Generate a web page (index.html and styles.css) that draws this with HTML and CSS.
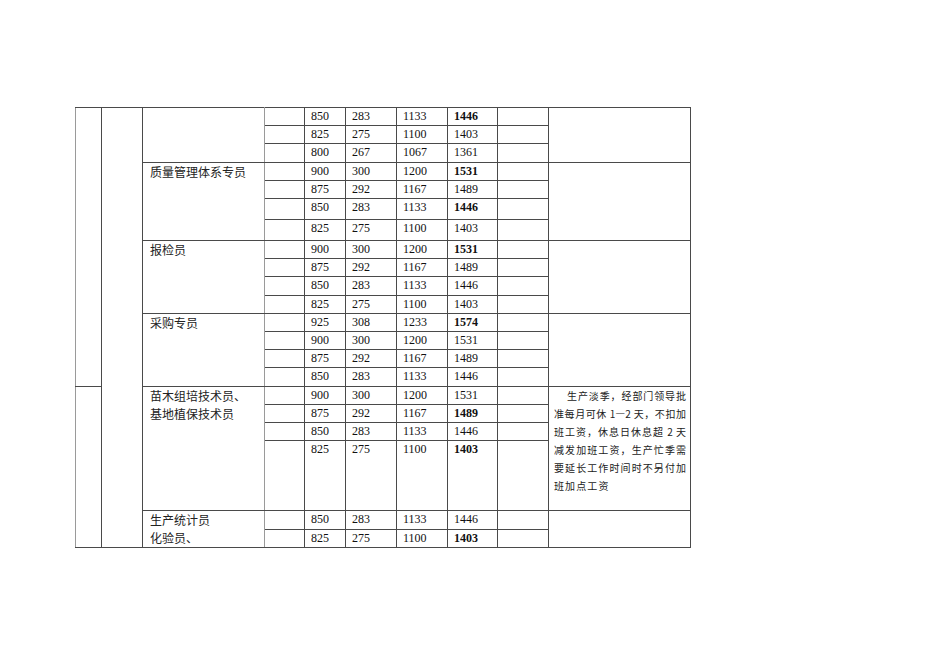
FILE: index.html
```html
<!DOCTYPE html>
<html lang="zh">
<head>
<meta charset="utf-8">
<title>工资表</title>
<link rel="stylesheet" href="styles.css">
</head>
<body>
<div class="page">
<table class="pay">
<colgroup>
<col class="c1"><col class="c2"><col class="c3"><col class="c4"><col class="c5"><col class="c6"><col class="c7"><col class="c8"><col class="c9"><col class="c10">
</colgroup>
<tbody>
<tr class="h18">
  <td class="lead" rowspan="15"></td>
  <td class="lead2" rowspan="21"></td>
  <td class="title" rowspan="3"></td>
  <td class="blank"></td><td>850</td><td>283</td><td class="lv">1133</td><td><b>1446</b></td><td></td>
  <td class="note" rowspan="3"></td>
</tr>
<tr class="h18"><td class="blank"></td><td>825</td><td>275</td><td class="lv">1100</td><td>1403</td><td></td></tr>
<tr class="h19"><td class="blank"></td><td>800</td><td>267</td><td class="lv">1067</td><td>1361</td><td></td></tr>

<tr class="h18 grp">
  <td class="title" rowspan="4">质量管理体系专员</td>
  <td class="blank"></td><td>900</td><td>300</td><td class="lv">1200</td><td><b>1531</b></td><td></td>
  <td class="note" rowspan="4"></td>
</tr>
<tr class="h18"><td class="blank"></td><td>875</td><td>292</td><td class="lv">1167</td><td>1489</td><td></td></tr>
<tr class="h21"><td class="blank"></td><td>850</td><td>283</td><td class="lv">1133</td><td><b>1446</b></td><td></td></tr>
<tr class="h21"><td class="blank"></td><td>825</td><td>275</td><td class="lv">1100</td><td>1403</td><td></td></tr>

<tr class="h18 grp lt">
  <td class="title" rowspan="4">报检员</td>
  <td class="blank"></td><td>900</td><td>300</td><td class="lv">1200</td><td><b>1531</b></td><td></td>
  <td class="note" rowspan="4"></td>
</tr>
<tr class="h18"><td class="blank"></td><td>875</td><td>292</td><td class="lv">1167</td><td>1489</td><td></td></tr>
<tr class="h19"><td class="blank"></td><td>850</td><td>283</td><td class="lv">1133</td><td>1446</td><td></td></tr>
<tr class="h18"><td class="blank"></td><td>825</td><td>275</td><td class="lv">1100</td><td>1403</td><td></td></tr>

<tr class="h18 grp">
  <td class="title" rowspan="4">采购专员</td>
  <td class="blank"></td><td>925</td><td>308</td><td class="lv">1233</td><td><b>1574</b></td><td></td>
  <td class="note" rowspan="4"></td>
</tr>
<tr class="h18"><td class="blank"></td><td>900</td><td>300</td><td class="lv">1200</td><td>1531</td><td></td></tr>
<tr class="h18"><td class="blank"></td><td>875</td><td>292</td><td class="lv">1167</td><td>1489</td><td></td></tr>
<tr class="h19"><td class="blank"></td><td>850</td><td>283</td><td class="lv">1133</td><td>1446</td><td></td></tr>

<tr class="h18 grp">
  <td class="lead" rowspan="6"></td>
  <td class="title tall" rowspan="4">苗木组培技术员、<br>基地植保技术员</td>
  <td class="blank"></td><td>900</td><td>300</td><td class="lv">1200</td><td>1531</td><td></td>
  <td class="note" rowspan="4">
    <span class="ln first">生产淡季，经部门领导批</span>
    <span class="ln">准每月可休 1—2 天，不扣加</span>
    <span class="ln">班工资，休息日休息超 2 天</span>
    <span class="ln">减发加班工资，生产忙季需</span>
    <span class="ln">要延长工作时间时不另付加</span>
    <span class="ln last">班加点工资</span>
  </td>
</tr>
<tr class="h18"><td class="blank"></td><td>875</td><td>292</td><td class="lv">1167</td><td><b>1489</b></td><td></td></tr>
<tr class="h18"><td class="blank"></td><td>850</td><td>283</td><td class="lv">1133</td><td>1446</td><td></td></tr>
<tr class="h70"><td class="blank"></td><td>825</td><td>275</td><td class="lv">1100</td><td><b>1403</b></td><td></td></tr>

<tr class="h18 grp lt">
  <td class="title tall" rowspan="2">生产统计员<br>化验员、</td>
  <td class="blank"></td><td>850</td><td>283</td><td class="lv">1133</td><td>1446</td><td></td>
  <td class="note" rowspan="2"></td>
</tr>
<tr class="h18"><td class="blank"></td><td>825</td><td>275</td><td class="lv">1100</td><td><b>1403</b></td><td></td></tr>
</tbody>
</table>
</div>
</body>
</html>
```

FILE: styles.css
```css
html, body {
  margin: 0;
  padding: 0;
  background: #ffffff;
}

.page {
  padding: 107px 0 0 75px;
}

.pay {
  border-collapse: collapse;
  table-layout: fixed;
  width: 615px;
  font-family: "Liberation Serif", "Noto Sans CJK SC", serif;
  font-size: 12px;
  color: #111;
}

.c1 { width: 26px; }
.c2 { width: 41px; }
.c3 { width: 122px; }
.c4 { width: 40px; }
.c5 { width: 41px; }
.c6 { width: 51px; }
.c7 { width: 51px; }
.c8 { width: 50px; }
.c9 { width: 51px; }
.c10 { width: 142px; }

.pay td {
  border: 1px solid #4a4a4a;
  padding: 0 0 0 6px;
  line-height: 17px;
  vertical-align: top;
  white-space: nowrap;
}

.pay td b {
  font-weight: bold;
}

.h18 { height: 18px; }
.h19 { height: 19px; }
.h21 { height: 21px; }
.h70 { height: 70px; }

.pay td.lead {
  border-left-color: #9a9a9a;
}

.pay td.title {
  padding-left: 7px;
  font-family: "Noto Sans CJK SC", sans-serif;
  font-size: 12px;
  color: #222;
  border-right-color: #9a9a9a;
}

.pay td.title.tall {
  line-height: 18px;
}

.pay td.blank {
  border-left-color: #9a9a9a;
}

.pay td.lv {
  border-left-color: #9a9a9a;
}

.pay tr.lt > td {
  border-top-color: #9a9a9a;
}

.pay td.note {
  padding: 0 4px 0 5px;
  white-space: normal;
  font-family: "Noto Sans CJK SC", sans-serif;
  font-size: 10px;
  color: #222;
}

.note .ln {
  display: block;
  height: 18px;
  line-height: 18px;
  text-align: justify;
  text-align-last: justify;
}

.note .ln.first {
  padding-left: 13px;
}

.note .ln.last {
  text-align-last: left;
  letter-spacing: 1.1px;
}
```
